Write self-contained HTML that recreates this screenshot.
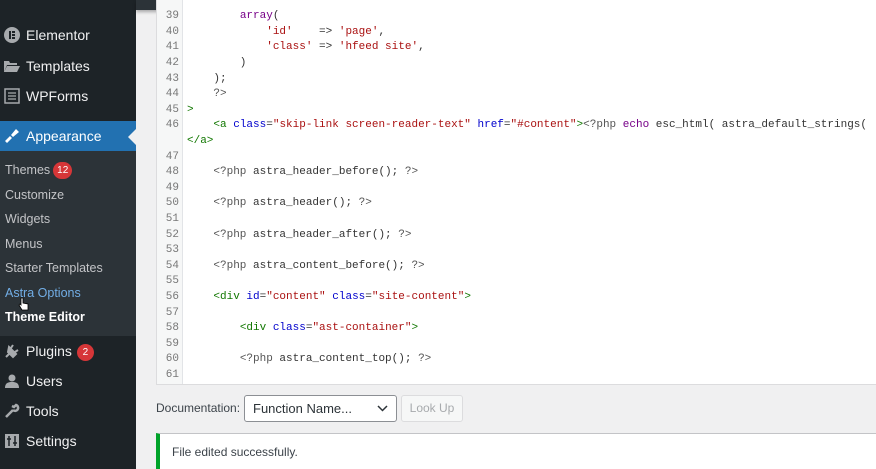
<!DOCTYPE html>
<html><head><meta charset="utf-8"><style>
*{margin:0;padding:0;box-sizing:border-box}
body{width:876px;height:469px;overflow:hidden;background:#f0f0f1;font-family:"Liberation Sans",sans-serif;position:relative}
#side{position:absolute;left:0;top:0;width:136px;height:469px;background:#1d2327}
.mi{position:absolute;left:0;width:136px;color:#f0f0f1;font-size:14px;line-height:30px;height:30px;padding-left:26px}
.ic{position:absolute;left:4px;top:7px;width:16px;height:16px}
#sub{position:absolute;left:0;top:151px;width:136px;height:185px;background:#2c3338}
.si{position:absolute;left:5px;font-size:12.5px;color:#c3c4c7;line-height:16px}
.badge{display:inline-block;background:#d63638;color:#fff;border-radius:9px;font-size:10px;line-height:17px;height:17px;min-width:17px;text-align:center;padding:0 4px;vertical-align:1px;margin-left:3px}
#pop{position:absolute;left:136px;top:0;width:147px;height:10px;background:#2c3338;box-shadow:0 2px 3px rgba(0,0,0,.3)}
#ed{position:absolute;left:156px;top:-2px;width:720px;height:387px;background:#fff;border:1px solid #dcdcde;border-right:0;overflow:hidden}
#gut{position:absolute;left:0;top:0;width:26px;height:100%;background:#f6f7f7;border-right:1px solid #e2e4e7}
.r{position:absolute;font-family:"Liberation Mono",monospace;font-size:11px;line-height:15.6px;white-space:pre;color:#333}
.n{left:0;width:22px;text-align:right;color:#777}
.c{left:30px}
.k{color:#708}.s{color:#a11}.t{color:#170}.a{color:#00c}.g{color:#555}
</style></head><body>
<div id="side">
<div class="mi" style="top:20px"><svg class="ic" viewBox="0 0 16 16"><circle cx="8" cy="8" r="8" fill="#a7aaad"/><rect x="5" y="4" width="2" height="8" fill="#1d2327"/><rect x="8" y="4" width="3" height="2" fill="#1d2327"/><rect x="8" y="7" width="3" height="2" fill="#1d2327"/><rect x="8" y="10" width="3" height="2" fill="#1d2327"/></svg>Elementor</div>
<div class="mi" style="top:51px"><svg class="ic" viewBox="0 0 16 16"><path d="M0 3h5l1 2h7v2H3L0 14z M3 8h13l-3 6H0z" fill="#a7aaad"/></svg>Templates</div>
<div class="mi" style="top:81px"><svg class="ic" viewBox="0 0 16 16"><rect x="1" y="1" width="14" height="14" fill="none" stroke="#a7aaad" stroke-width="1.5"/><path d="M4 5h8M4 8h8M4 11h8" stroke="#a7aaad" stroke-width="1.3"/></svg>WPForms</div>
<div class="mi" style="top:121px;background:#2271b1;color:#fff"><svg class="ic" viewBox="0 0 16 16"><path d="M1 13l5-5 2 2-5 5zM7 7l5-6 3 3-6 5z" fill="#fff"/></svg>Appearance</div>
<div style="position:absolute;left:128px;top:129px;width:0;height:0;border:8px solid transparent;border-right-color:#f0f0f1;border-left:0"></div>
<div id="sub">
<div class="si" style="top:11px">Themes<span class="badge">12</span></div>
<div class="si" style="top:36px">Customize</div>
<div class="si" style="top:60px">Widgets</div>
<div class="si" style="top:85px">Menus</div>
<div class="si" style="top:109px">Starter Templates</div>
<div class="si" style="top:134px;color:#72aee6">Astra Options</div>
<div class="si" style="top:158px;color:#fff;font-weight:bold">Theme Editor</div>
<svg style="position:absolute;left:18px;top:146px" width="11" height="14" viewBox="0 0 11 14"><path d="M3 1v7l-1-1-1 1 3 5h6V7L5 6V1z" fill="#fff" stroke="#000" stroke-width=".8"/></svg>
</div>
<div class="mi" style="top:336px"><svg class="ic" viewBox="0 0 16 16"><path d="M2 14l3-3 M5 4l7 7-3 3-5-5z M9 2l-2 3M14 7l-3 2" stroke="#a7aaad" stroke-width="2" fill="#a7aaad"/></svg>Plugins<span class="badge" style="margin-left:5px">2</span></div>
<div class="mi" style="top:366px"><svg class="ic" viewBox="0 0 16 16"><circle cx="8" cy="5" r="3.5" fill="#a7aaad"/><path d="M1 15c0-5 3-6 7-6s7 1 7 6z" fill="#a7aaad"/></svg>Users</div>
<div class="mi" style="top:396px"><svg class="ic" viewBox="0 0 16 16"><path d="M2 14l7-7M9 7a3 3 0 1 0 3-5l-2 2-2-1" stroke="#a7aaad" stroke-width="2.5" fill="none"/></svg>Tools</div>
<div class="mi" style="top:426px"><svg class="ic" viewBox="0 0 16 16"><rect x="1" y="1" width="14" height="14" fill="#a7aaad"/><path d="M5 3v10M11 3v10M3 6h4M9 10h4" stroke="#1d2327" stroke-width="1.5"/></svg>Settings</div>
</div>
<div id="pop"></div>
<div id="ed"><div id="gut"></div>
<div style="position:absolute;left:0;top:2px">
<div class="r n" style="top:8.2px">39</div><div class="r c" style="top:8.2px">        <span class="k">array</span>(</div>
<div class="r n" style="top:23.8px">40</div><div class="r c" style="top:23.8px">            <span class="s">'id'</span>    =&gt; <span class="s">'page'</span>,</div>
<div class="r n" style="top:39.4px">41</div><div class="r c" style="top:39.4px">            <span class="s">'class'</span> =&gt; <span class="s">'hfeed site'</span>,</div>
<div class="r n" style="top:55px">42</div><div class="r c" style="top:55px">        )</div>
<div class="r n" style="top:70.6px">43</div><div class="r c" style="top:70.6px">    );</div>
<div class="r n" style="top:86.2px">44</div><div class="r c" style="top:86.2px">    <span class="g">?&gt;</span></div>
<div class="r n" style="top:101.8px">45</div><div class="r c" style="top:101.8px"><span class="t">&gt;</span></div>
<div class="r n" style="top:117.4px">46</div><div class="r c" style="top:117.4px">    <span class="t">&lt;a</span> <span class="a">class</span>=<span class="s">"skip-link screen-reader-text"</span> <span class="a">href</span>=<span class="s">"#content"</span><span class="t">&gt;</span><span class="g">&lt;?php</span> <span class="k">echo</span> esc_html( astra_default_strings( <span class="s">'string'</span></div>
<div class="r c" style="top:133px"><span class="t">&lt;/a&gt;</span></div>
<div class="r n" style="top:148.6px">47</div>
<div class="r n" style="top:164.2px">48</div><div class="r c" style="top:164.2px">    <span class="g">&lt;?php</span> astra_header_before(); <span class="g">?&gt;</span></div>
<div class="r n" style="top:179.8px">49</div>
<div class="r n" style="top:195.4px">50</div><div class="r c" style="top:195.4px">    <span class="g">&lt;?php</span> astra_header(); <span class="g">?&gt;</span></div>
<div class="r n" style="top:211px">51</div>
<div class="r n" style="top:226.6px">52</div><div class="r c" style="top:226.6px">    <span class="g">&lt;?php</span> astra_header_after(); <span class="g">?&gt;</span></div>
<div class="r n" style="top:242.2px">53</div>
<div class="r n" style="top:257.8px">54</div><div class="r c" style="top:257.8px">    <span class="g">&lt;?php</span> astra_content_before(); <span class="g">?&gt;</span></div>
<div class="r n" style="top:273.4px">55</div>
<div class="r n" style="top:289px">56</div><div class="r c" style="top:289px">    <span class="t">&lt;div</span> <span class="a">id</span>=<span class="s">"content"</span> <span class="a">class</span>=<span class="s">"site-content"</span><span class="t">&gt;</span></div>
<div class="r n" style="top:304.6px">57</div>
<div class="r n" style="top:320.2px">58</div><div class="r c" style="top:320.2px">        <span class="t">&lt;div</span> <span class="a">class</span>=<span class="s">"ast-container"</span><span class="t">&gt;</span></div>
<div class="r n" style="top:335.8px">59</div>
<div class="r n" style="top:351.4px">60</div><div class="r c" style="top:351.4px">        <span class="g">&lt;?php</span> astra_content_top(); <span class="g">?&gt;</span></div>
<div class="r n" style="top:367px">61</div>
</div></div>
<div style="position:absolute;left:156px;top:401px;font-size:12px;color:#3c434a">Documentation:</div>
<div style="position:absolute;left:244px;top:395px;width:153px;height:27px;border:1px solid #8c8f94;border-radius:3px;background:#fff;font-size:13px;color:#2c3338;line-height:25px;padding-left:8px">Function Name...<svg style="position:absolute;right:8px;top:9px" width="11" height="7" viewBox="0 0 11 7"><path d="M1 1l4.5 4.5L10 1" stroke="#2c3338" stroke-width="1.5" fill="none"/></svg></div>
<div style="position:absolute;left:401px;top:395px;width:62px;height:27px;border:1px solid #dcdcde;border-radius:3px;background:#f6f7f7;font-size:12px;color:#a7aaad;line-height:25px;text-align:center">Look Up</div>
<div style="position:absolute;left:156px;top:433px;width:720px;height:36px;background:#fff;border-left:4px solid #00a32a;border-top:1px solid #c3c4c7"></div>
<div style="position:absolute;left:172px;top:445px;font-size:12px;color:#3c434a">File edited successfully.</div>
</body></html>
